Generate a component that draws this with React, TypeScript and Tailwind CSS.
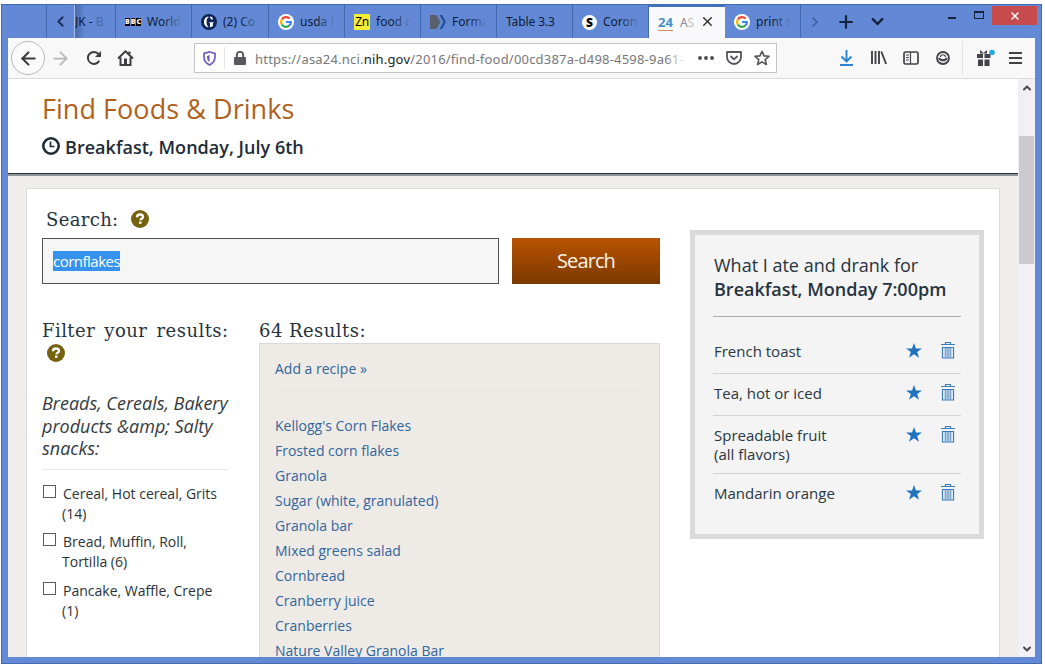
import React from "react";
import { ChevronLeft, ChevronRight, ChevronDown, ChevronUp, Plus, X, ArrowLeft, ArrowRight } from "lucide-react";

const results = [
  "Kellogg's Corn Flakes",
  "Frosted corn flakes",
  "Granola",
  "Sugar (white, granulated)",
  "Granola bar",
  "Mixed greens salad",
  "Cornbread",
  "Cranberry juice",
  "Cranberries",
  "Nature Valley Granola Bar",
];

const filters = [
  ["Cereal, Hot cereal, Grits", "(14)"],
  ["Bread, Muffin, Roll,", "Tortilla (6)"],
  ["Pancake, Waffle, Crepe", "(1)"],
];

const foods = [
  { lines: ["French toast"], h: "h-[37px]" },
  { lines: ["Tea, hot or iced"], h: "h-[42px]" },
  { lines: ["Spreadable fruit", "(all flavors)"], h: "h-[58px]" },
  { lines: ["Mandarin orange"], h: "h-[42px]" },
];

function Google() {
  return (
    <svg width="16" height="16" viewBox="0 0 16 16" className="shrink-0">
      <circle cx="8" cy="8" r="8" fill="#fff" />
      <g fill="none" strokeWidth="2.2">
        <path d="M3.9 5.3A4.9 4.9 0 0 1 11.5 4.5" stroke="#ea4335" />
        <path d="M3.9 10.7A4.9 4.9 0 0 1 3.9 5.3" stroke="#fbbc05" />
        <path d="M11.2 11.7A4.9 4.9 0 0 1 3.9 10.7" stroke="#34a853" />
        <path d="M8 8H12.9A4.9 4.9 0 0 1 11.2 11.7" stroke="#4285f4" />
      </g>
    </svg>
  );
}

function Guardian() {
  return (
    <svg width="16" height="16" viewBox="0 0 16 16" className="shrink-0">
      <circle cx="8" cy="8" r="8" fill="#0a2358" />
      <path d="M7.4 2.6C4.5 3 2.9 5.2 2.9 8s1.7 5 4.5 5.4V12.6C6.1 12 5.6 10.5 5.6 8s.5-4 1.8-4.6zM8.8 2.6v.9L11 5.9h.6V3.7C10.8 3.1 9.9 2.7 8.8 2.6zM8.1 8.2v.6l.9.5v3.9c1 0 2.2-.6 2.9-1.2V9.3l.9-.5v-.6z" fill="#fff" />
    </svg>
  );
}

function Tab({ icon, label, width = "w-[76px]", fade = "from-[#6389d6]", labelClass = "" }: { icon?: React.ReactNode; label: string; width?: string; fade?: string; labelClass?: string }) {
  return (
    <div className={`relative flex h-full shrink-0 items-center gap-[6px] overflow-hidden border-r border-[#426aae] pl-[9px] pt-[1px] ${width}`}>
      {icon}
      <span className={`whitespace-nowrap text-[12px] leading-4 text-[#0d1c38] ${labelClass}`}>{label}</span>
      <span className={`absolute right-0 top-1 h-6 w-[28px] bg-linear-to-l from-30% to-transparent ${fade}`} />
    </div>
  );
}

function Help() {
  return (
    <svg width="18" height="18" viewBox="0 0 18 18" className="shrink-0">
      <circle cx="9" cy="9" r="9" fill="#75610f" />
      <path d="M6 7.2C6 5.3 7.3 4.5 9 4.5s3 .9 3 2.4c0 1.9-2.3 1.8-2.6 3.3" fill="none" stroke="#fff" strokeWidth="2.3" />
      <rect x="8" y="11.5" width="2.5" height="2.3" fill="#fff" />
    </svg>
  );
}

function Star() {
  return (
    <svg width="16" height="15" viewBox="0 0 16 15" className="mt-px">
      <path d="M8 0l2 5.5h6l-4.8 3.5 1.8 5.8L8 11.3l-5 3.500 1.8-5.8L0 5.5h6z" fill="#2273bd" />
    </svg>
  );
}

function Trash() {
  return (
    <svg width="14" height="17" viewBox="0 0 14 17" fill="none" stroke="#3a7cba">
      <path d="M0 2.5h14M4.5 2V.5h5V2M1.5 5.5h11v10.5h-11z" strokeWidth="1.2" />
      <path d="M4.25 6v9.5M6.1 6v9.5M7.9 6v9.5M9.75 6v9.5" strokeWidth="0.9" />
    </svg>
  );
}

function TitleBar() {
  return (
    <div className="flex h-[33px] shrink-0 font-['Noto_Sans',sans-serif]">
      <div className="flex w-[73px] shrink-0">
        <div className="w-[45px] border-r border-[#426aae]" />
        <div className="flex w-[28px] items-center justify-center border-r border-[#a7bfea]">
          <ChevronLeft size={17} strokeWidth={2.8} color="#1b3157" />
        </div>
      </div>
      <div className="relative flex h-full w-[41px] shrink-0 items-center overflow-hidden border-r border-[#426aae] bg-linear-to-r from-[#496ba9] to-[#6389d6] to-25% pt-px">
        <span className="whitespace-nowrap text-[12px] text-[#0d1c38]">JK - <span className="opacity-30">B</span></span>
      </div>
      <Tab
        icon={<span className="flex shrink-0 gap-px text-[7px] font-bold leading-[8px] text-white"><b className="bg-black">B</b><b className="bg-black">B</b><b className="bg-black">C</b></span>}
        label="World"
      />
      <Tab width="w-[77px]" icon={<Guardian />} label="(2) Co" />
      <Tab icon={<Google />} label="usda f" />
      <Tab
        icon={<span className="h-4 w-4 shrink-0 bg-[#f4ee36] text-center text-[12px] leading-[15px] tracking-[-0.3px] text-black">Zn</span>}
        label="food c"
      />
      <Tab
        icon={
          <svg width="16" height="14" viewBox="0 0 16 14" className="shrink-0">
            <path d="M0 0h6.5l4 7-4 7H0z" fill="#59606c" />
            <path d="M9.5 0h2.5l4 7-4 7H9.5l4-7z" fill="#234f97" />
          </svg>
        }
        label="Forma"
      />
      <Tab label="Table 3.3" fade="from-transparent" labelClass="tracking-[-0.1px]" />
      <Tab
        icon={<span className="h-[15px] w-[15px] shrink-0 rounded-full bg-white text-center text-[12px] font-black leading-[15px] text-black">S</span>}
        label="Coron"
      />
      <div className="relative flex h-full w-[76px] shrink-0 items-center border-t-2 border-[#3f74ba] bg-[#f9f9fb] pl-[9px]">
        <span className="border-b border-[#d08a5c] text-[13px] font-bold leading-[15px] text-[#4a8fc7]">24</span>
        <span className="ml-[7px] text-[12px] text-[#8a8a8e]">A<span className="opacity-50">S</span></span>
        <X size={15} strokeWidth={2.4} color="#333" className="absolute left-[51px] top-[7px]" />
      </div>
      <Tab icon={<Google />} label="print s" />
      <div className="flex items-center">
        <ChevronRight size={16} strokeWidth={2.4} color="#3e5f9f" className="ml-[6px]" />
        <Plus size={20} strokeWidth={2.6} color="#14223c" className="ml-[13px]" />
        <ChevronDown size={19} strokeWidth={3} color="#14223c" className="ml-[12px]" />
      </div>
      <div className="ml-auto flex items-start">
        <span className="mr-[18px] mt-[12px] h-[2px] w-[8px] bg-[#14223c]" />
        <span className="mr-[8px] mt-[6px] h-[8px] w-[10px] border border-t-2 border-[#14223c]" />
        <span className="mr-[4px] mt-[1px] flex h-[19px] w-[45px] items-center justify-center bg-[#c74a4c]">
          <X size={12} strokeWidth={3} color="#fff" />
        </span>
      </div>
    </div>
  );
}

function Toolbar() {
  return (
    <div className="flex h-[41px] shrink-0 items-center border-b border-[#dcdcde] bg-[#f8f8f9] font-['Noto_Sans',sans-serif]">
      <span className="ml-[3px] flex h-[34px] w-[34px] items-center justify-center rounded-full border border-[#b9b9bc] bg-[#fbfbfc]">
        <ArrowLeft size={21} strokeWidth={2.4} color="#3a3a3e" />
      </span>
      <ArrowRight size={21} strokeWidth={2} color="#b5b5b8" className="ml-[5px]" />
      <svg width="16" height="16" viewBox="0 0 16 16" className="ml-[15px]" fill="none" stroke="#3f3f43" strokeWidth="2">
        <path d="M13.2 10.8A6 6 0 1 1 12.6 4.2" />
        <path d="M15 1v6H9z" fill="#3f3f43" stroke="none" />
      </svg>
      <svg width="17" height="16" viewBox="0 0 17 16" className="ml-[15px]" fill="none" stroke="#3f3f43" strokeWidth="2">
        <path d="M1 8.5L8.5 1.3 16 8.5M3.5 7.5V15h10V7.5M12.5 4V1.5" />
        <path d="M8.5 8.5v6" strokeWidth="3" />
      </svg>
      <div className="ml-[60px] flex h-[30px] w-[583px] shrink-0 items-center border border-[#c7c3c4] bg-white">
        <svg width="13" height="15" viewBox="0 0 13 15" className="ml-[8px]" fill="none">
          <path d="M6.5 1L12 2.5V6c0 4-2.5 6.5-5.5 8C3.5 12.5 1 10 1 6V2.5z" stroke="#6b5fbf" strokeWidth="1.7" />
          <path d="M6.5 4v7C4.5 9.8 4 8 4 5z" fill="#6757ba" />
        </svg>
        <span className="ml-[8px] h-[22px] w-px bg-[#e4e4e6]" />
        <svg width="12" height="14" viewBox="0 0 12 14" className="ml-[9px]">
          <rect y="6" width="12" height="8" rx="1" fill="#58585c" />
          <path d="M2.8 7V4a3.2 3.2 0 0 1 6.4 0v3" fill="none" stroke="#58585c" strokeWidth="2" />
        </svg>
        <div className="relative ml-[9px] mt-[2px] w-[431px] overflow-hidden whitespace-nowrap text-[13px] leading-[20px] tracking-[0.2px] text-[#77777b]">
          https://asa24.nci.<span className="text-[#1c1c20]">nih.gov</span>/2016/find-food/00cd387a-d498-4598-9a61-
          <span className="absolute right-0 top-0 h-full w-[20px] bg-linear-to-l from-white to-transparent" />
        </div>
        <svg width="18" height="4" viewBox="0 0 18 4" className="ml-[11px]" fill="#4a4a4e">
          <circle cx="3" cy="2" r="1.9" /><circle cx="9" cy="2" r="1.9" /><circle cx="15" cy="2" r="1.9" />
        </svg>
        <svg width="16" height="14" viewBox="0 0 16 14" className="ml-[11px]" fill="none" stroke="#55555a" strokeWidth="1.8">
          <path d="M1 1h14v5a7 7 0 0 1-14 0zM4.5 5L8 8.3 11.5 5" strokeLinejoin="round" />
        </svg>
        <svg width="16" height="16" viewBox="0 0 16 16" className="ml-[12px]" fill="none" stroke="#55555a" strokeWidth="1.6">
          <path d="M8 1.3l2 4.6 5 .4-3.8 3.3 1.2 4.9L8 11.9l-4.4 2.6 1.2-4.9L1 6.3l5-.4z" strokeLinejoin="round" />
        </svg>
      </div>
      <svg width="13" height="16" viewBox="0 0 13 16" className="ml-[63px]" fill="none" stroke="#2a83d0" strokeWidth="1.9">
        <path d="M6.5 0v11M1.5 6.5l5 5 5-5M0 15h13" />
      </svg>
      <svg width="16" height="14" viewBox="0 0 16 14" className="ml-[18px]" fill="none" stroke="#434347" strokeWidth="1.9">
        <path d="M1 0v13M4.5 0v13M8 0v13M10.3 .5l4.8 12.5" />
      </svg>
      <svg width="16" height="14" viewBox="0 0 16 14" className="ml-[16px]" fill="none" stroke="#434347" strokeWidth="1.7">
        <rect x="1" y="1" width="14" height="12" rx="1.5" /><path d="M7.5 1v12M3 4h3M3 6.5h3M3 9h3" strokeWidth="1.2" />
      </svg>
      <svg width="14" height="14" viewBox="0 0 14 14" className="ml-[17px]" fill="none" stroke="#434347" strokeWidth="1.8">
        <circle cx="7" cy="7" r="6" /><path d="M3 7c1.5 3 6.5 3 8 0" strokeWidth="2" /><path d="M4.5 6c0-3 5-3 5 0" strokeWidth="1.1" />
      </svg>
      <span className="ml-[12px] h-[34px] w-px bg-[#e4e4e6]" />
      <svg width="20" height="18" viewBox="0 0 20 18" className="ml-[13px]" fill="#434347">
        <path d="M1 5h6v4H1zM8.5 5h6v4h-6zM2 10.5h5V17H2zM8.5 10.5h5V17h-5zM4 1l3.5 3L11 1v3.5H4z" />
        <circle cx="16" cy="3.5" r="2.8" fill="#27a9e0" />
      </svg>
      <svg width="13" height="12" viewBox="0 0 13 12" className="ml-[13px]" stroke="#434347" strokeWidth="1.8">
        <path d="M0 1h13M0 6h13M0 11h13" />
      </svg>
    </div>
  );
}

function Filters() {
  return (
    <div className="w-[187px] shrink-0">
      <h2 className="mt-[3px] whitespace-nowrap font-['DejaVu_Serif',serif] text-[18px] leading-[24px] tracking-[0.45px] text-[#26333f] [word-spacing:3px]">Filter your results:</h2>
      <div className="ml-[5px] mt-px flex h-[18px]"><Help /></div>
      <div className="mr-px mt-[30px] whitespace-nowrap border-b border-[#e6e6e6] pb-[9px] text-[18px] italic leading-[22.5px] text-[#333a40]">
        <div>Breads, Cereals, Bakery</div>
        <div>products &amp;amp; Salty</div>
        <div>snacks:</div>
      </div>
      <ul className="mt-[14px] flex flex-col gap-[8.5px] whitespace-nowrap text-[14px] leading-[20px] text-[#2b3238]">
        {filters.map(([a, b]) => (
          <li key={a} className="flex">
            <span className="ml-[1px] mt-[1px] h-[13px] w-[13px] shrink-0 border border-[#5b5b5b] bg-white" />
            <span className="ml-[7px]">
              <span className="block">{a}</span>
              <span className="-ml-px block">{b}</span>
            </span>
          </li>
        ))}
      </ul>
      <div className="mt-[30px] whitespace-nowrap text-[17px] font-semibold italic leading-[23px] text-[#26333f]">Candies, sauce of</div>
    </div>
  );
}

function Results() {
  return (
    <div className="ml-[30px] w-[401px] shrink-0">
      <h2 className="mt-[3px] h-[24px] whitespace-nowrap font-['DejaVu_Serif',serif] text-[18px] leading-[24px] tracking-[0.45px] text-[#26333f]">64 Results:</h2>
      <div className="h-[400px] border border-[#dadada] bg-[#eeebe7] px-[15px] text-[14px] text-[#32659b]">
        <div className="border-b border-[#e9e6e2] pb-[12px] pt-[15px] leading-[20px]">Add a recipe »</div>
        <div className="mt-[21px]">
          {results.map((name) => (
            <div key={name} className="h-[25px] leading-[25px]">{name}</div>
          ))}
        </div>
      </div>
    </div>
  );
}

function Eaten() {
  return (
    <aside className="ml-[30px] mt-[41px] h-[309px] w-[294px] shrink-0 border-[5px] border-[#dadada] bg-[#f4f4f4] pl-[18px] pr-[18px] pt-[18px]">
      <div className="whitespace-nowrap border-b border-[#ababab] pb-[15px] text-[18px] leading-[24px] text-[#26333f]">
        <div className="pl-px">What I ate and drank for</div>
        <div className="pl-px font-semibold">Breakfast, Monday 7:00pm</div>
      </div>
      <div className="mt-[20px]">
        {foods.map((f, i) => (
          <div key={i} className={`flex ${f.h} ${i === 0 ? "pt-[5px]" : "pt-[10px]"} ${i < 3 ? "border-b border-[#d2d2d2]" : ""}`}>
            <div className="w-[193px] pl-px text-[15px] leading-[19px] text-[#2b3640]">
              {f.lines.map((l) => <div key={l}>{l}</div>)}
            </div>
            <div className="flex h-[19px] items-start gap-[19px]"><Star /><Trash /></div>
          </div>
        ))}
      </div>
    </aside>
  );
}

export default function App() {
  return (
    <div className="h-[665px] w-[1045px] overflow-hidden bg-white pl-[1px] pt-[4px] font-['Open_Sans',sans-serif]">
      <div className="flex h-[660px] w-[1041px] flex-col border border-[#426aae] bg-[#6389d6]">
        <TitleBar />
        <div className="mx-[6px] flex h-[619px] flex-col overflow-hidden">
          <Toolbar />
          <div className="flex min-h-0 flex-1">
            <main className="w-[1010px] shrink-0 overflow-hidden bg-[#efeeea]">
              <header className="h-[97px] border-b-2 border-[#90959a] bg-white">
                <div className="h-[95px] border-b border-[#24313b] pl-[34px] pt-[12px]">
                  <h1 className="text-[27px] leading-[36px] tracking-[0.05px] text-[#b0611d]">Find Foods &amp; Drinks</h1>
                  <div className="mt-[8px] flex items-center text-[18px] font-semibold leading-[24px] text-[#1f2c38]">
                    <svg width="18" height="18" viewBox="0 0 18 18" className="mb-[2px] mr-[5px]" fill="none" stroke="#1f2c38">
                      <circle cx="9" cy="9" r="7.7" strokeWidth="2.6" />
                      <path d="M8.5 4.5v5H12.5" strokeWidth="1.7" />
                    </svg>
                    <span className="whitespace-nowrap tracking-[0.03px]">Breakfast, Monday, July 6th</span>
                  </div>
                </div>
              </header>
              <div className="ml-[18px] mt-[12px] flex h-[480px] w-[974px] border border-[#dcdcd8] bg-white pl-[15px]">
                <div className="w-[618px] shrink-0">
                  <div className="flex h-[49px] items-center gap-[12px] pb-[2px] pl-[4px] pt-[13px]">
                    <label className="whitespace-nowrap pt-[2px] font-['DejaVu_Serif',serif] text-[18px] leading-[24px] tracking-[0.35px] text-[#26333f]">Search:</label>
                    <Help />
                  </div>
                  <div className="flex gap-[13px]">
                    <div className="flex h-[46px] w-[457px] items-center border border-[#4d5154] bg-[#f6f6f6] pl-[10px]">
                      <span className="h-[20px] w-[67px] whitespace-nowrap bg-[#3593ee] text-[15px] leading-[20px] tracking-[-0.5px] text-white">cornflakes</span>
                    </div>
                    <button className="h-[46px] w-[148px] bg-linear-to-b from-[#b85300] to-[#7c3900] text-[20px] tracking-[-0.9px] text-[#fbf3e6]">Search</button>
                  </div>
                  <div className="mt-[32px] flex">
                    <Filters />
                    <Results />
                  </div>
                </div>
                <Eaten />
              </div>
            </main>
            <div className="flex w-[17px] flex-col items-center bg-[#f1f1f3]">
              <ChevronUp size={12} strokeWidth={4} color="#48484c" className="mt-[3px] shrink-0" />
              <div className="mt-[42px] h-[128px] w-[15px] shrink-0 bg-[#cbcbcd]" />
              <ChevronDown size={12} strokeWidth={4} color="#48484c" className="mb-[2px] mt-auto shrink-0" />
            </div>
          </div>
        </div>
      </div>
    </div>
  );
}
